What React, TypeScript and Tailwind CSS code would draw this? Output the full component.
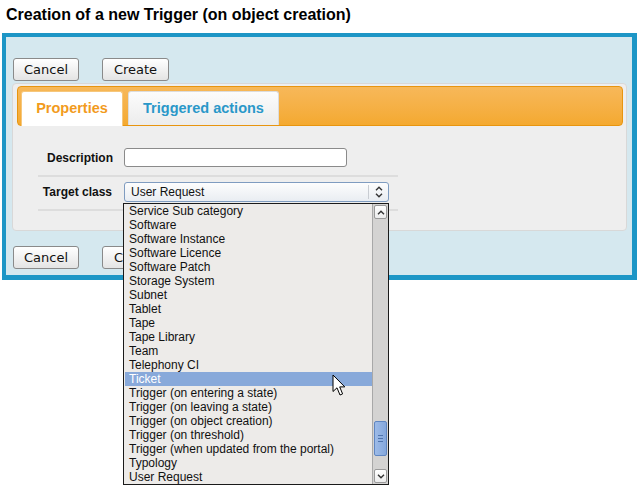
import React from 'react'

const classes = [
  'Service Sub category',
  'Software',
  'Software Instance',
  'Software Licence',
  'Software Patch',
  'Storage System',
  'Subnet',
  'Tablet',
  'Tape',
  'Tape Library',
  'Team',
  'Telephony CI',
  'Ticket',
  'Trigger (on entering a state)',
  'Trigger (on leaving a state)',
  'Trigger (on object creation)',
  'Trigger (on threshold)',
  'Trigger (when updated from the portal)',
  'Typology',
  'User Request',
]

function Button({ label, w }: { label: string; w: string }) {
  return (
    <button
      className={`${w} h-[23px] rounded-[3px] border border-[#8a8a8a] bg-gradient-to-b from-white to-[#e4e4e4] text-[13px] leading-none text-[#111] font-['DejaVu_Sans',sans-serif]`}
    >
      {label}
    </button>
  )
}

function ButtonRow() {
  return (
    <div className="flex gap-[23px] pl-[7px]">
      <Button label="Cancel" w="w-[66px]" />
      <Button label="Create" w="w-[67px]" />
    </div>
  )
}

function Chevron({ up }: { up?: boolean }) {
  return (
    <svg width="8" height="5" viewBox="0 0 8 5" className="block">
      <path
        d={up ? 'M1 4.2 L4 1.2 L7 4.2' : 'M1 0.8 L4 3.8 L7 0.8'}
        fill="none"
        stroke="#333"
        strokeWidth="1.4"
      />
    </svg>
  )
}

function Dropdown() {
  return (
    <div className="absolute left-[123px] top-[203px] flex h-[282px] w-[266px] border border-[#1a1a1a] bg-[#edebe9]">
      <ul className="flex-1 pl-px text-[12px] font-['Liberation_Sans',Arial,sans-serif] text-[#111]">
        {classes.map((c) => (
          <li
            key={c}
            className={`h-[14px] whitespace-nowrap pl-[4px] leading-[14px] ${
              c === 'Ticket' ? 'bg-[#88a9da] text-white' : ''
            }`}
          >
            {c}
          </li>
        ))}
      </ul>
      <div className="flex w-[16px] flex-col border-l border-[#a8a8a8] bg-[#d4d3d2] p-px">
        <div className="flex h-[14px] items-center justify-center rounded-[2px] border border-[#9a9a9a] bg-gradient-to-b from-white to-[#ececec]">
          <Chevron up />
        </div>
        <div className="mt-[202px] flex h-[35px] flex-col items-center justify-center gap-[2px] rounded-[2px] border border-[#5f86c2] bg-gradient-to-r from-[#9dbbe8] to-[#84a7dc]">
          <span className="block h-px w-[5px] bg-[#4f74ad]" />
          <span className="block h-px w-[5px] bg-[#4f74ad]" />
          <span className="block h-px w-[5px] bg-[#4f74ad]" />
        </div>
        <div className="flex-1" />
        <div className="flex h-[14px] items-center justify-center rounded-[2px] border border-[#9a9a9a] bg-gradient-to-b from-white to-[#ececec]">
          <Chevron />
        </div>
      </div>
    </div>
  )
}

export default function App() {
  return (
    <div className="relative h-[493px] w-[637px] overflow-hidden bg-white font-['Liberation_Sans',Arial,sans-serif] text-[#111]">
      <h1 className="h-[33px] px-[6px] pt-[5px] text-[16px] font-bold leading-[19px] text-black">
        Creation of a new Trigger (on object creation)
      </h1>

      <div className="ml-[2px] h-[247px] w-[635px] border-b-[5px] border-l-4 border-r-[5px] border-t-4 border-[#1d96c6] bg-[#d5e8ef] pt-[21px]">
        <ButtonRow />

        <div className="ml-[6px] mt-[2px] h-[148px] w-[615px] rounded-[4px] border border-[#d8d8d8] bg-[#eeeeee] pl-[4px] pr-[3px] pt-[2px]">
          <div className="h-[40px] rounded-[4px] border border-[#e8950f] bg-gradient-to-b from-[#f7b859] to-[#f4a92f]">
            <div className="flex h-full items-end gap-[5px] pl-[3px]">
              <div className="-mb-px flex h-[35px] w-[102px] items-center justify-center rounded-t-[3px] border border-b-0 border-[#f6c77c] bg-white text-[14.5px] font-bold text-[#f29b1d]">
                Properties
              </div>
              <div className="flex h-[34px] w-[151px] items-center justify-center rounded-t-[3px] border border-b-0 border-[#dcdcdc] bg-gradient-to-b from-[#fcfcfc] to-[#ececec] text-[14.5px] font-bold text-[#2a98c9]">
                Triggered actions
              </div>
            </div>
          </div>

          <div className="ml-[21px] mt-[15px] w-[360px] text-[12px]">
            <div className="flex items-center border-b-2 border-[#dddddd] pb-[8px] pt-[7px]">
              <label className="w-[80px] pr-[5px] text-right font-bold">Description</label>
              <input className="ml-[6px] h-[19px] w-[223px] rounded-[3px] border border-[#8a8a8a] bg-white outline-none" />
            </div>
            <div className="flex items-center border-b-2 border-[#dddddd] pb-[7px] pt-[5px]">
              <label className="w-[80px] pr-[6px] text-right font-bold">Target class</label>
              <div className="ml-[6px] flex h-[20px] w-[265px] items-center rounded-[3px] border border-[#7f9cc0] bg-gradient-to-b from-[#fdfdfd] to-[#e9edf2] pl-[6px]">
                <span className="flex-1">User Request</span>
                <span className="h-[14px] w-px bg-[#c8ccd2]" />
                <span className="flex w-[19px] flex-col items-center gap-[2px]">
                  <Chevron up />
                  <Chevron />
                </span>
              </div>
            </div>
          </div>
        </div>

        <div className="mt-[15px]">
          <ButtonRow />
        </div>
      </div>

      <Dropdown />

      <svg
        className="absolute left-[332px] top-[374px]"
        width="15"
        height="23"
        viewBox="0 0 15 23"
      >
        <path
          d="M1 1 L1 17.5 L5 13.8 L8 21 L10.6 19.9 L7.7 12.9 L12.8 12.9 Z"
          fill="white"
          stroke="black"
          strokeWidth="1"
          strokeLinejoin="round"
        />
      </svg>
    </div>
  )
}
